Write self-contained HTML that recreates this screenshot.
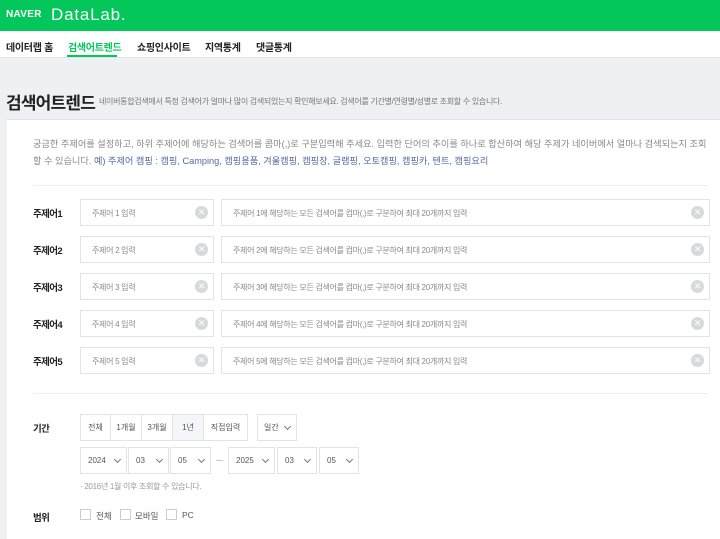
<!DOCTYPE html>
<html><head><meta charset="utf-8"><style>
*{box-sizing:border-box;margin:0;padding:0}
body{width:720px;height:537px;overflow:hidden;background:#eef0f3;font-family:"Liberation Sans","Noto Sans CJK KR",sans-serif;position:relative;color:#333}
.a{position:absolute}
.hd{left:0;top:0;width:720px;height:31px;background:#03c75a}
.nav{left:0;top:31px;width:720px;height:27px;background:#fff;border-bottom:1px solid #e3e5e8}
.nav span{position:absolute;top:8px;font-size:10px;font-weight:bold;color:#222;letter-spacing:-0.3px}
.panel{left:7px;top:119px;width:713px;height:420px;background:#fff;border-top:1px solid #dfe2e6}
.lbl{font-size:9.5px;font-weight:bold;color:#222;letter-spacing:-0.6px}
.in{border:1px solid #e3e3e3;height:27px;font-size:8px;color:#888;padding:8px 11px;letter-spacing:-0.3px;background:#fff}
.x{position:absolute;right:5px;top:6px;width:13px;height:13px;border-radius:50%;background:#d7d9dc;color:#fff;font-size:9px;line-height:13px;text-align:center}
.b{border:1px solid #e3e3e3;height:27px;font-size:8px;color:#555;text-align:center;line-height:25px;background:#fff}
.chev{display:inline-block;width:5px;height:5px;border-right:1px solid #777;border-bottom:1px solid #777;transform:rotate(45deg);position:absolute;top:9px}
.cb{width:11px;height:11px;border:1px solid #ccc;background:#fff}
</style></head><body>
<div class="a hd"></div>
<div class="a" style="left:6px;top:9px;font-size:10px;font-weight:900;color:#fff;letter-spacing:0.3px">NAVER</div>
<div class="a" style="left:51px;top:5px;font-size:17px;color:#fff;letter-spacing:0.8px;font-weight:300">DataLab.</div>
<div class="a nav">
<span style="left:6px">데이터랩 홈</span>
<span style="left:68px;color:#03c75a">검색어트렌드</span>
<span style="left:137px">쇼핑인사이트</span>
<span style="left:205px">지역통계</span>
<span style="left:256px">댓글통계</span>
<div class="a" style="left:67px;top:24px;width:50px;height:2px;background:#03c75a"></div>
</div>
<div class="a" style="left:6px;top:89px;font-size:17px;font-weight:bold;color:#222;letter-spacing:-0.8px">검색어트렌드</div>
<div class="a" style="left:99px;top:96px;font-size:8px;color:#777;letter-spacing:-0.3px">네이버통합검색에서 특정 검색어가 얼마나 많이 검색되었는지 확인해보세요. 검색어를 기간별/연령별/성별로 조회할 수 있습니다.</div>
<div class="a panel"></div>
<div class="a" style="left:33px;top:136px;width:690px;font-size:9.2px;line-height:17px;color:#888;letter-spacing:0;white-space:nowrap">궁금한 주제어를 설정하고, 하위 주제어에 해당하는 검색어를 콤마(,)로 구분입력해 주세요. 입력한 단어의 추이를 하나로 합산하여 해당 주제가 네이버에서 얼마나 검색되는지 조회<br>할 수 있습니다. <span style="color:#5469a3">예) 주제어 캠핑 : 캠핑, Camping, 캠핑용품, 겨울캠핑, 캠핑장, 글램핑, 오토캠핑, 캠핑카, 텐트, 캠핑요리</span></div>
<div class="a" style="left:33px;top:185px;width:675px;height:1px;background:#eceef0"></div>

<div class="a lbl" style="left:33px;top:206px">주제어1</div>
<div class="a in" style="left:80px;top:199px;width:134px">주제어 1 입력<span class="x">✕</span></div>
<div class="a in" style="left:221px;top:199px;width:489px">주제어 1에 해당하는 모든 검색어를 컴마(,)로 구분하여 최대 20개까지 입력<span class="x">✕</span></div>
<div class="a lbl" style="left:33px;top:243px">주제어2</div>
<div class="a in" style="left:80px;top:236px;width:134px">주제어 2 입력<span class="x">✕</span></div>
<div class="a in" style="left:221px;top:236px;width:489px">주제어 2에 해당하는 모든 검색어를 컴마(,)로 구분하여 최대 20개까지 입력<span class="x">✕</span></div>
<div class="a lbl" style="left:33px;top:280px">주제어3</div>
<div class="a in" style="left:80px;top:273px;width:134px">주제어 3 입력<span class="x">✕</span></div>
<div class="a in" style="left:221px;top:273px;width:489px">주제어 3에 해당하는 모든 검색어를 컴마(,)로 구분하여 최대 20개까지 입력<span class="x">✕</span></div>
<div class="a lbl" style="left:33px;top:317px">주제어4</div>
<div class="a in" style="left:80px;top:310px;width:134px">주제어 4 입력<span class="x">✕</span></div>
<div class="a in" style="left:221px;top:310px;width:489px">주제어 4에 해당하는 모든 검색어를 컴마(,)로 구분하여 최대 20개까지 입력<span class="x">✕</span></div>
<div class="a lbl" style="left:33px;top:354px">주제어5</div>
<div class="a in" style="left:80px;top:347px;width:134px">주제어 5 입력<span class="x">✕</span></div>
<div class="a in" style="left:221px;top:347px;width:489px">주제어 5에 해당하는 모든 검색어를 컴마(,)로 구분하여 최대 20개까지 입력<span class="x">✕</span></div>
<div class="a" style="left:33px;top:393px;width:675px;height:1px;background:#eceef0"></div>

<div class="a lbl" style="left:33px;top:421px">기간</div>
<div class="a b" style="left:80px;top:414px;width:31px">전체</div>
<div class="a b" style="left:110px;top:414px;width:32px">1개월</div>
<div class="a b" style="left:141px;top:414px;width:32px">3개월</div>
<div class="a b" style="left:172px;top:414px;width:32px;background:#f4f6f9">1년</div>
<div class="a b" style="left:203px;top:414px;width:45px">직접입력</div>
<div class="a b" style="left:257px;top:414px;width:40px;text-align:left;padding-left:6px">일간<span class="chev" style="left:27px"></span></div>

<div class="a b" style="left:80px;top:447px;width:47px;text-align:left;padding-left:7px">2024<span class="chev" style="left:34px"></span></div>
<div class="a b" style="left:128px;top:447px;width:41px;text-align:left;padding-left:7px">03<span class="chev" style="left:28px"></span></div>
<div class="a b" style="left:170px;top:447px;width:41px;text-align:left;padding-left:7px">05<span class="chev" style="left:28px"></span></div>
<div class="a" style="left:216px;top:460px;width:7px;height:1px;background:#ccc"></div>
<div class="a b" style="left:228px;top:447px;width:47px;text-align:left;padding-left:7px">2025<span class="chev" style="left:34px"></span></div>
<div class="a b" style="left:277px;top:447px;width:40px;text-align:left;padding-left:7px">03<span class="chev" style="left:27px"></span></div>
<div class="a b" style="left:319px;top:447px;width:40px;text-align:left;padding-left:7px">05<span class="chev" style="left:27px"></span></div>
<div class="a" style="left:80px;top:481px;font-size:8px;color:#999;letter-spacing:-0.3px">· 2016년 1월 이후 조회할 수 있습니다.</div>

<div class="a lbl" style="left:33px;top:510px">범위</div>
<div class="a cb" style="left:80px;top:509px"></div><div class="a" style="left:96px;top:510px;font-size:8.5px;color:#555">전체</div>
<div class="a cb" style="left:120px;top:509px"></div><div class="a" style="left:135px;top:510px;font-size:8.5px;color:#555">모바일</div>
<div class="a cb" style="left:166px;top:509px"></div><div class="a" style="left:182px;top:510px;font-size:8.5px;color:#555">PC</div>
</body></html>
